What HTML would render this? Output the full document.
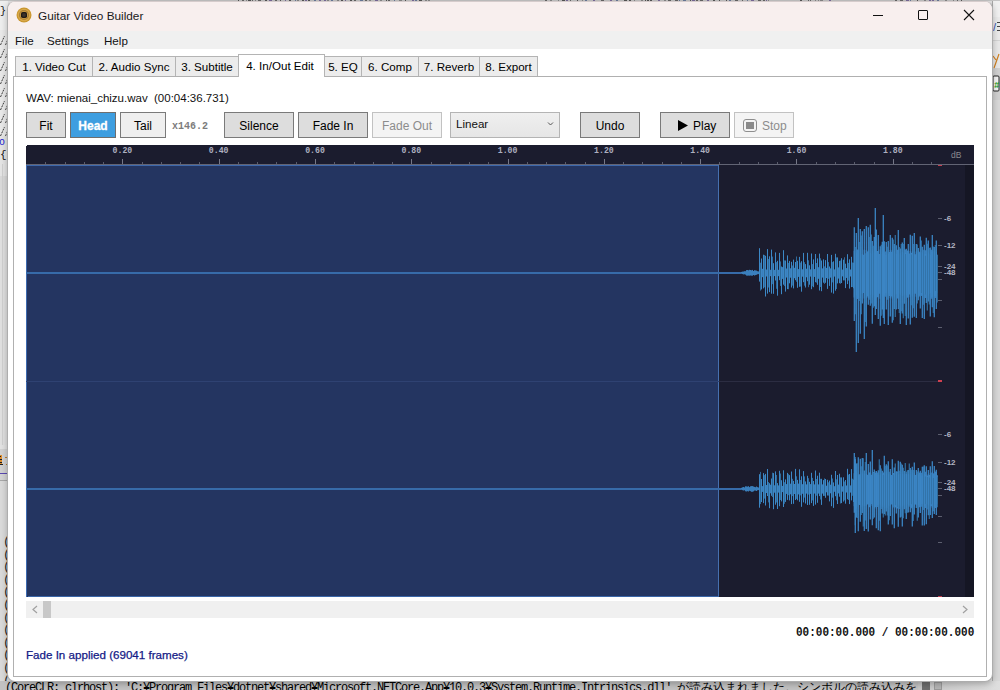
<!DOCTYPE html>
<html><head><meta charset="utf-8">
<style>
*{box-sizing:border-box}
html,body{margin:0;padding:0;width:1000px;height:690px;overflow:hidden;background:#e4e4e4;font-family:"Liberation Sans",sans-serif;}
.a{position:absolute}
.t{position:absolute;white-space:nowrap;line-height:1}
.btn{position:absolute;border:1px solid #7a7a7a;background:#dddddd;color:#000;font-size:12px;display:flex;align-items:center;justify-content:center;padding-top:2px}
.tab{position:absolute;top:56px;height:20px;border:1px solid #b4b4b4;border-bottom:none;background:#ececec;font-size:11.6px;color:#000;display:flex;align-items:center;justify-content:center;padding-bottom:1px}
</style></head><body>
<!-- background: other windows -->
<div class="a" style="left:0;top:0;width:1000px;height:690px;background:#e2e2e2"></div>
<svg class="a" style="left:0;top:0" width="1000" height="690">
  <rect x="0" y="0" width="8" height="30" fill="#eeeeee"/>
  <rect x="0" y="30" width="8" height="106" fill="#e9e9e9"/>
  <rect x="0" y="136" width="8" height="40" fill="#e4e4e4"/>
  <rect x="0" y="176" width="8" height="14" fill="#d9d9d9"/>
  <rect x="0" y="190" width="8" height="255" fill="#e0e0e0"/>
  <rect x="2" y="164" width="1" height="281" fill="#d0d0d0"/>
  <rect x="0" y="449" width="8" height="24" fill="#d2d2d2"/>
  <rect x="0" y="473" width="8" height="1" fill="#5a48b0"/>
  <rect x="0" y="474" width="8" height="6" fill="#d4d4d4"/>
  <rect x="0" y="480" width="8" height="1" fill="#a8a8a8"/>
  <rect x="0" y="481" width="8" height="209" fill="#dadada"/>
  <rect x="0" y="455" width="2" height="9" fill="#e09030"/>
  <rect x="0" y="456" width="1" height="1" fill="#222"/><rect x="0" y="459" width="2" height="1" fill="#222"/><rect x="0" y="462" width="2" height="1" fill="#222"/>
  <rect x="0" y="464" width="3" height="1" fill="#222"/>
  <rect x="5" y="457" width="2" height="1" fill="#c08030"/><rect x="6" y="464" width="1" height="1" fill="#c08030"/>
  <path d="M0.5 45L4.5 36" stroke="#3a3a3a" stroke-width="1" stroke-dasharray="2 1"/><path d="M5.5 45L8 39" stroke="#4a4a4a" stroke-width="1" stroke-dasharray="2 1"/><path d="M0.5 58L4.5 49" stroke="#3a3a3a" stroke-width="1" stroke-dasharray="2 1"/><path d="M5.5 58L8 52" stroke="#4a4a4a" stroke-width="1" stroke-dasharray="2 1"/><path d="M0.5 71L4.5 62" stroke="#3a3a3a" stroke-width="1" stroke-dasharray="2 1"/><path d="M5.5 71L8 65" stroke="#4a4a4a" stroke-width="1" stroke-dasharray="2 1"/><path d="M0.5 84L4.5 75" stroke="#3a3a3a" stroke-width="1" stroke-dasharray="2 1"/><path d="M5.5 84L8 78" stroke="#4a4a4a" stroke-width="1" stroke-dasharray="2 1"/><path d="M0.5 97L4.5 88" stroke="#3a3a3a" stroke-width="1" stroke-dasharray="2 1"/><path d="M5.5 97L8 91" stroke="#4a4a4a" stroke-width="1" stroke-dasharray="2 1"/><path d="M0.5 110L4.5 101" stroke="#3a3a3a" stroke-width="1" stroke-dasharray="2 1"/><path d="M5.5 110L8 104" stroke="#4a4a4a" stroke-width="1" stroke-dasharray="2 1"/><path d="M0.5 123L4.5 114" stroke="#3a3a3a" stroke-width="1" stroke-dasharray="2 1"/><path d="M5.5 123L8 117" stroke="#4a4a4a" stroke-width="1" stroke-dasharray="2 1"/><path d="M0.5 136L4.5 127" stroke="#3a3a3a" stroke-width="1" stroke-dasharray="2 1"/><path d="M5.5 136L8 130" stroke="#4a4a4a" stroke-width="1" stroke-dasharray="2 1"/>
  <text x="0" y="14" font-family="Liberation Mono" font-size="10" fill="#111">}</text>
  <text x="-1" y="145" font-family="Liberation Mono" font-size="10" fill="#2020d0">o</text><rect x="7" y="137" width="1" height="7" fill="#3030d0"/>
  <text x="0" y="158" font-family="Liberation Mono" font-size="11" fill="#111">{</text>
  <g font-family="Liberation Mono" font-size="12.5" fill="#222"><text x="3" y="545.0">(</text><text x="3" y="557.6">(</text><text x="3" y="570.2">(</text><text x="3" y="582.8">(</text><text x="3" y="595.4">(</text><text x="3" y="608.0">(</text><text x="3" y="620.6">(</text><text x="3" y="633.2">(</text><text x="3" y="645.8">(</text><text x="3" y="658.4">(</text><text x="3" y="671.0">(</text><text x="3" y="683.6">(</text></g>
  <rect x="992" y="0" width="8" height="690" fill="#d8d8d8"/>
  <rect x="992" y="0" width="8" height="17" fill="#f0f0f0"/>
  <rect x="992" y="17" width="8" height="23" fill="#eaeaea"/>
  <rect x="992" y="40" width="8" height="1" fill="#d4d4d4"/>
  <rect x="992" y="41" width="8" height="27" fill="#e8e8e8"/>
  <rect x="992" y="68" width="8" height="32" fill="#d0d0d0"/>
  <rect x="993" y="76" width="6" height="15" rx="1" fill="#f4f4f4" stroke="#222" stroke-width="1"/>
  <text x="994" y="88" font-family="Liberation Mono" font-size="9" font-weight="bold" fill="#1a9a1a">#</text>
  <text x="993" y="31" font-family="Liberation Sans" font-size="11" fill="#3050b0">/</text>
  <rect x="997" y="22" width="3" height="1" fill="#444"/><rect x="997" y="26" width="3" height="1" fill="#444"/><rect x="997" y="30" width="3" height="1" fill="#444"/>
  <path d="M993 56L996 60M999 54L994 68" stroke="#d08020" stroke-width="1.2" fill="none"/>
  <rect x="992" y="0" width="1" height="690" fill="#a8a8a8"/>
  <rect x="0" y="0" width="1000" height="1" fill="#c4c4c4"/>
  <rect x="238" y="0" width="1" height="1" fill="#555"/><rect x="242" y="0" width="2" height="1" fill="#666"/><rect x="246" y="0" width="1" height="1" fill="#888"/><rect x="248" y="0" width="3" height="1" fill="#555"/><rect x="252" y="0" width="1" height="1" fill="#666"/><rect x="255" y="0" width="1" height="1" fill="#888"/><rect x="258" y="0" width="3" height="1" fill="#666"/><rect x="265" y="0" width="2" height="1" fill="#555"/><rect x="269" y="0" width="3" height="1" fill="#7a6a9a"/><rect x="275" y="0" width="2" height="1" fill="#666"/><rect x="280" y="0" width="1" height="1" fill="#555"/><rect x="285" y="0" width="1" height="1" fill="#7a6a9a"/><rect x="289" y="0" width="2" height="1" fill="#555"/><rect x="295" y="0" width="1" height="1" fill="#6a7a9a"/><rect x="297" y="0" width="2" height="1" fill="#888"/><rect x="302" y="0" width="2" height="1" fill="#555"/><rect x="305" y="0" width="2" height="1" fill="#7a6a9a"/><rect x="308" y="0" width="2" height="1" fill="#555"/><rect x="314" y="0" width="2" height="1" fill="#6a7a9a"/><rect x="319" y="0" width="2" height="1" fill="#7a6a9a"/><rect x="324" y="0" width="2" height="1" fill="#7a6a9a"/><rect x="327" y="0" width="2" height="1" fill="#888"/><rect x="331" y="0" width="2" height="1" fill="#6a7a9a"/><rect x="337" y="0" width="2" height="1" fill="#888"/><rect x="341" y="0" width="2" height="1" fill="#555"/><rect x="345" y="0" width="1" height="1" fill="#7a6a9a"/><rect x="350" y="0" width="2" height="1" fill="#555"/><rect x="354" y="0" width="2" height="1" fill="#666"/><rect x="360" y="0" width="3" height="1" fill="#6a7a9a"/><rect x="365" y="0" width="2" height="1" fill="#666"/><rect x="369" y="0" width="2" height="1" fill="#888"/><rect x="375" y="0" width="3" height="1" fill="#7a6a9a"/><rect x="380" y="0" width="2" height="1" fill="#888"/><rect x="386" y="0" width="1" height="1" fill="#555"/><rect x="388" y="0" width="2" height="1" fill="#666"/><rect x="394" y="0" width="1" height="1" fill="#6a7a9a"/><rect x="399" y="0" width="3" height="1" fill="#888"/><rect x="405" y="0" width="1" height="1" fill="#555"/><rect x="412" y="0" width="2" height="1" fill="#7a6a9a"/><rect x="415" y="0" width="2" height="1" fill="#6a7a9a"/><rect x="419" y="0" width="3" height="1" fill="#555"/><rect x="425" y="0" width="2" height="1" fill="#888"/><rect x="428" y="0" width="2" height="1" fill="#888"/><rect x="545" y="0" width="2" height="1" fill="#666"/><rect x="550" y="0" width="2" height="1" fill="#888"/><rect x="558" y="0" width="1" height="1" fill="#888"/><rect x="562" y="0" width="3" height="1" fill="#555"/><rect x="566" y="0" width="2" height="1" fill="#7a6a9a"/><rect x="570" y="0" width="1" height="1" fill="#666"/><rect x="577" y="0" width="1" height="1" fill="#555"/><rect x="582" y="0" width="1" height="1" fill="#888"/><rect x="585" y="0" width="2" height="1" fill="#6a7a9a"/><rect x="593" y="0" width="2" height="1" fill="#7a6a9a"/><rect x="601" y="0" width="3" height="1" fill="#666"/><rect x="610" y="0" width="2" height="1" fill="#7a6a9a"/><rect x="616" y="0" width="2" height="1" fill="#6a7a9a"/><rect x="624" y="0" width="3" height="1" fill="#555"/><rect x="629" y="0" width="2" height="1" fill="#555"/><rect x="634" y="0" width="1" height="1" fill="#888"/><rect x="641" y="0" width="2" height="1" fill="#888"/><rect x="645" y="0" width="1" height="1" fill="#555"/><rect x="647" y="0" width="2" height="1" fill="#555"/><rect x="650" y="0" width="2" height="1" fill="#555"/><rect x="658" y="0" width="2" height="1" fill="#7a6a9a"/><rect x="664" y="0" width="2" height="1" fill="#888"/><rect x="668" y="0" width="3" height="1" fill="#666"/><rect x="675" y="0" width="3" height="1" fill="#666"/><rect x="679" y="0" width="1" height="1" fill="#6a7a9a"/><rect x="683" y="0" width="3" height="1" fill="#6a7a9a"/><rect x="690" y="0" width="1" height="1" fill="#555"/><rect x="692" y="0" width="3" height="1" fill="#7a6a9a"/><rect x="696" y="0" width="2" height="1" fill="#666"/><rect x="700" y="0" width="3" height="1" fill="#666"/><rect x="707" y="0" width="2" height="1" fill="#7a6a9a"/><rect x="713" y="0" width="2" height="1" fill="#555"/><rect x="719" y="0" width="1" height="1" fill="#555"/><rect x="726" y="0" width="1" height="1" fill="#555"/><rect x="729" y="0" width="2" height="1" fill="#6a7a9a"/><rect x="735" y="0" width="3" height="1" fill="#666"/><rect x="742" y="0" width="1" height="1" fill="#666"/><rect x="747" y="0" width="1" height="1" fill="#6a7a9a"/><rect x="751" y="0" width="3" height="1" fill="#7a6a9a"/><rect x="758" y="0" width="3" height="1" fill="#666"/><rect x="763" y="0" width="2" height="1" fill="#666"/><rect x="766" y="0" width="1" height="1" fill="#7a6a9a"/><rect x="768" y="0" width="1" height="1" fill="#888"/><rect x="800" y="0" width="2" height="1" fill="#555"/><rect x="808" y="0" width="1" height="1" fill="#666"/><rect x="810" y="0" width="1" height="1" fill="#666"/><rect x="815" y="0" width="1" height="1" fill="#888"/><rect x="818" y="0" width="1" height="1" fill="#888"/><rect x="820" y="0" width="3" height="1" fill="#888"/><rect x="829" y="0" width="2" height="1" fill="#7a6a9a"/><rect x="895" y="0" width="2" height="1" fill="#666"/><rect x="900" y="0" width="3" height="1" fill="#666"/><rect x="906" y="0" width="3" height="1" fill="#7a6a9a"/><rect x="910" y="0" width="1" height="1" fill="#6a7a9a"/><rect x="917" y="0" width="1" height="1" fill="#555"/><rect x="924" y="0" width="2" height="1" fill="#888"/><rect x="929" y="0" width="2" height="1" fill="#7a6a9a"/><rect x="932" y="0" width="2" height="1" fill="#7a6a9a"/><rect x="937" y="0" width="2" height="1" fill="#6a7a9a"/><rect x="945" y="0" width="2" height="1" fill="#888"/><rect x="953" y="0" width="1" height="1" fill="#888"/><rect x="957" y="0" width="1" height="1" fill="#666"/><rect x="961" y="0" width="1" height="1" fill="#555"/>
</svg>
<div class="a" style="left:0;top:681px;width:1000px;height:9px;background:#c2c2c2"></div>
<div class="t" style="left:5px;top:682px;font-family:'Liberation Mono',monospace;font-size:12px;color:#000"><span style="letter-spacing:-1.2px">(CoreCLR: clrhost): 'C:¥Program Files¥dotnet¥shared¥Microsoft.NETCore.App¥10.0.3¥System.Runtime.Intrinsics.dll' </span>が読み込まれました。シンボルの読み込みを</div>
<div class="a" style="left:918px;top:681px;width:82px;height:9px;background:linear-gradient(90deg,#c6c6c6,#dedede)"></div>
<div class="a" style="left:922px;top:682px;width:8px;height:8px;background:#6e6e6e"></div>
<div class="a" style="left:934px;top:682px;width:8px;height:8px;border:1px solid #9a9a9a;background:#b4b4b4"></div>
<!-- window -->
<div class="a" style="left:7px;top:1px;width:986px;height:681px;border:1px solid #adadad;border-top-color:#d6cccc;border-radius:8px;background:#fff;box-shadow:0 2px 6px rgba(0,0,0,0.25);overflow:hidden">
  <div class="a" style="left:0;top:0;width:984px;height:29px;background:#f8efee"></div>
  <div class="a" style="left:0;top:29px;width:984px;height:18px;background:#f0f0f0"></div>
</div>
<!-- title -->
<svg class="a" style="left:16px;top:7px" width="16" height="16"><circle cx="8" cy="8" r="7.5" fill="#c9962f"/><circle cx="8" cy="8" r="6.3" fill="#d8a84a"/><circle cx="8" cy="8" r="5" fill="#a57c34"/><circle cx="8" cy="8" r="4.2" fill="#c4963e"/><rect x="5" y="5" width="6" height="6" rx="1.8" fill="#1e1a16"/><rect x="6.3" y="6.3" width="3.4" height="3.4" rx="1" fill="#3a322a"/></svg>
<div class="t" style="left:38px;top:10.5px;font-size:11.8px;color:#1a1a1a">Guitar Video Builder</div>
<div class="a" style="left:873px;top:15px;width:10px;height:1px;background:#111"></div>
<div class="a" style="left:918px;top:10px;width:10px;height:10px;border:1px solid #111;border-radius:1px"></div>
<svg class="a" style="left:963px;top:9px" width="12" height="12"><path d="M1 1L11 11M11 1L1 11" stroke="#111" stroke-width="1.1"/></svg>
<!-- menu -->
<div class="t" style="left:15px;top:35px;font-size:11.6px;color:#111">File</div>
<div class="t" style="left:47px;top:35px;font-size:11.6px;color:#111">Settings</div>
<div class="t" style="left:104px;top:35px;font-size:11.6px;color:#111">Help</div>

<!-- tab panel -->
<div class="a" style="left:13px;top:76px;width:974px;height:601px;border:1px solid #b0b0b0;background:#fff"></div>
<div class="tab" style="left:15px;width:78px">1. Video Cut</div>
<div class="tab" style="left:92px;width:84px">2. Audio Sync</div>
<div class="tab" style="left:175px;width:64px">3. Subtitle</div>
<div class="tab" style="left:324px;width:38px">5. EQ</div>
<div class="tab" style="left:361px;width:58px">6. Comp</div>
<div class="tab" style="left:418px;width:62px">7. Reverb</div>
<div class="tab" style="left:479px;width:59px">8. Export</div>
<div class="tab" style="left:238px;top:54px;width:87px;height:23px;background:#fff;padding-bottom:2px;padding-right:3px">4. In/Out Edit</div>

<div class="t" style="left:26px;top:92.5px;font-size:11.5px;color:#111">WAV: mienai_chizu.wav&nbsp; (00:04:36.731)</div>

<!-- toolbar -->
<div class="btn" style="left:26px;top:112px;width:40px;height:26px">Fit</div>
<div class="btn" style="left:70px;top:112px;width:46px;height:26px;background:#3e9ee0;border-color:#6e6e6e;color:#fff;font-weight:bold;-webkit-text-stroke:0.3px #fff">Head</div>
<div class="btn" style="left:120px;top:112px;width:46px;height:26px;background:#efefef">Tail</div>
<div class="t" style="left:172px;top:122px;font-family:'Liberation Mono',monospace;font-size:10px;color:#7c7c7c;font-weight:bold">x146.2</div>
<div class="btn" style="left:224px;top:112px;width:70px;height:26px">Silence</div>
<div class="btn" style="left:298px;top:112px;width:70px;height:26px">Fade In</div>
<div class="btn" style="left:372px;top:112px;width:70px;height:26px;background:#f4f4f4;border-color:#c2c2c2;color:#8c8c8c">Fade Out</div>
<div class="a" style="left:450px;top:112px;width:110px;height:26px;border:1px solid #b4b4b4;background:linear-gradient(#efefef,#e6e6e6)"></div>
<div class="t" style="left:456px;top:118px;font-size:11.6px;color:#111">Linear</div>
<svg class="a" style="left:547px;top:121px" width="8" height="6"><path d="M1 1.5L3.5 4L6 1.5" stroke="#555" stroke-width="1" fill="none"/></svg>
<div class="btn" style="left:580px;top:112px;width:60px;height:26px">Undo</div>
<div class="btn" style="left:660px;top:112px;width:70px;height:26px"></div>
<svg class="a" style="left:677px;top:119px" width="12" height="13"><path d="M1 1L11 6.5L1 12Z" fill="#000"/></svg>
<div class="t" style="left:693px;top:120px;font-size:12px;color:#000">Play</div>
<div class="btn" style="left:734px;top:112px;width:60px;height:26px;background:#f4f4f4;border-color:#c2c2c2"></div>
<div class="a" style="left:743px;top:119px;width:14px;height:13px;border:1.6px solid #8e8e8e;border-radius:3px"></div>
<div class="a" style="left:746px;top:122px;width:8px;height:7px;background:#8a8a8a"></div>
<div class="t" style="left:762px;top:120px;font-size:12px;color:#8c8c8c">Stop</div>

<!-- waveform panel -->
<svg class="a" style="left:0;top:0" width="1000" height="690" shape-rendering="crispEdges">
  <rect x="26" y="145" width="948" height="452" rx="2" fill="#1b1c2e"/>
  <rect x="965" y="165" width="9" height="432" fill="#151624"/>
  <path d="M26 165H719V597H28Q26 597 26 595Z" fill="#243561"/>
  <rect x="26" y="164" width="948" height="1" fill="#626474"/>
  <rect x="26" y="165" width="693" height="1" fill="#3d68ac"/>
  <rect x="26" y="165" width="1" height="432" fill="#3d6ab0"/>
  <rect x="718" y="165" width="1" height="432" fill="#4670b0"/>
  <rect x="28" y="596" width="691" height="1" fill="#3a66a8"/>
  <rect x="26" y="381" width="693" height="1" fill="#2f4272"/>
  <rect x="719" y="381" width="220" height="1" fill="#2c2d42"/>
  <rect x="938" y="380" width="4" height="2" fill="#d04050"/>
  <rect x="938" y="165" width="4" height="1" fill="#c04050"/>
  <rect x="938" y="596" width="4" height="1" fill="#c04050"/>
  <rect x="26" y="272" width="715" height="2" fill="#376ba9"/>
  <rect x="26" y="488" width="715" height="2" fill="#376ba9"/>
  <rect x="45" y="162" width="1" height="2" fill="#5a5c6c"/>
<rect x="65" y="162" width="1" height="2" fill="#5a5c6c"/>
<rect x="84" y="162" width="1" height="2" fill="#5a5c6c"/>
<rect x="103" y="162" width="1" height="2" fill="#5a5c6c"/>
<rect x="122" y="159" width="1" height="5" fill="#767888"/>
<rect x="142" y="162" width="1" height="2" fill="#5a5c6c"/>
<rect x="161" y="162" width="1" height="2" fill="#5a5c6c"/>
<rect x="180" y="162" width="1" height="2" fill="#5a5c6c"/>
<rect x="199" y="162" width="1" height="2" fill="#5a5c6c"/>
<rect x="219" y="159" width="1" height="5" fill="#767888"/>
<rect x="238" y="162" width="1" height="2" fill="#5a5c6c"/>
<rect x="257" y="162" width="1" height="2" fill="#5a5c6c"/>
<rect x="276" y="162" width="1" height="2" fill="#5a5c6c"/>
<rect x="296" y="162" width="1" height="2" fill="#5a5c6c"/>
<rect x="315" y="159" width="1" height="5" fill="#767888"/>
<rect x="334" y="162" width="1" height="2" fill="#5a5c6c"/>
<rect x="354" y="162" width="1" height="2" fill="#5a5c6c"/>
<rect x="373" y="162" width="1" height="2" fill="#5a5c6c"/>
<rect x="392" y="162" width="1" height="2" fill="#5a5c6c"/>
<rect x="411" y="159" width="1" height="5" fill="#767888"/>
<rect x="431" y="162" width="1" height="2" fill="#5a5c6c"/>
<rect x="450" y="162" width="1" height="2" fill="#5a5c6c"/>
<rect x="469" y="162" width="1" height="2" fill="#5a5c6c"/>
<rect x="488" y="162" width="1" height="2" fill="#5a5c6c"/>
<rect x="508" y="159" width="1" height="5" fill="#767888"/>
<rect x="527" y="162" width="1" height="2" fill="#5a5c6c"/>
<rect x="546" y="162" width="1" height="2" fill="#5a5c6c"/>
<rect x="565" y="162" width="1" height="2" fill="#5a5c6c"/>
<rect x="585" y="162" width="1" height="2" fill="#5a5c6c"/>
<rect x="604" y="159" width="1" height="5" fill="#767888"/>
<rect x="623" y="162" width="1" height="2" fill="#5a5c6c"/>
<rect x="642" y="162" width="1" height="2" fill="#5a5c6c"/>
<rect x="662" y="162" width="1" height="2" fill="#5a5c6c"/>
<rect x="681" y="162" width="1" height="2" fill="#5a5c6c"/>
<rect x="700" y="159" width="1" height="5" fill="#767888"/>
<rect x="719" y="162" width="1" height="2" fill="#5a5c6c"/>
<rect x="739" y="162" width="1" height="2" fill="#5a5c6c"/>
<rect x="758" y="162" width="1" height="2" fill="#5a5c6c"/>
<rect x="777" y="162" width="1" height="2" fill="#5a5c6c"/>
<rect x="796" y="159" width="1" height="5" fill="#767888"/>
<rect x="816" y="162" width="1" height="2" fill="#5a5c6c"/>
<rect x="835" y="162" width="1" height="2" fill="#5a5c6c"/>
<rect x="854" y="162" width="1" height="2" fill="#5a5c6c"/>
<rect x="874" y="162" width="1" height="2" fill="#5a5c6c"/>
<rect x="893" y="159" width="1" height="5" fill="#767888"/>
<rect x="912" y="162" width="1" height="2" fill="#5a5c6c"/>
<rect x="931" y="162" width="1" height="2" fill="#5a5c6c"/>
  <g font-family="Liberation Mono" font-size="8.2" font-weight="bold" fill="#aeb0c0" shape-rendering="auto">
  <text x="122.4" y="153" text-anchor="middle">0.20</text>
<text x="218.7" y="153" text-anchor="middle">0.40</text>
<text x="315.0" y="153" text-anchor="middle">0.60</text>
<text x="411.3" y="153" text-anchor="middle">0.80</text>
<text x="507.6" y="153" text-anchor="middle">1.00</text>
<text x="603.9" y="153" text-anchor="middle">1.20</text>
<text x="700.2" y="153" text-anchor="middle">1.40</text>
<text x="796.5" y="153" text-anchor="middle">1.60</text>
<text x="892.8" y="153" text-anchor="middle">1.80</text>
  </g>
  <text x="951" y="158" font-family="Liberation Sans" font-size="8.5" fill="#8a8a90" shape-rendering="auto">dB</text>
  <g shape-rendering="auto">
  <path d="M741.5 271.9V273.8M742.5 271.6V274.1M743.5 271.5V274.4M744.5 271.2V274.3M745.5 271.2V274.7M746.5 270.1V275.6M747.5 270.0V275.7M748.5 270.3V275.6M749.5 269.8V275.7M750.5 270.0V275.5M751.5 270.3V275.7M752.5 269.9V275.7M753.5 271.0V275.0M754.5 270.2V275.5M755.5 270.4V275.1M756.5 270.6V274.8M757.5 271.2V274.3M758.5 271.4V274.1M759.5 269.6V276.4M760.5 268.7V277.3M761.5 268.5V277.5M762.5 268.8V277.2M763.5 268.2V277.8M764.5 267.2V278.8M765.5 268.0V278.0M766.5 269.5V276.5M767.5 267.3V278.7M768.5 269.4V276.6M769.5 269.1V276.9M770.5 269.8V276.2M771.5 269.7V276.3M772.5 269.5V276.5M773.5 267.4V278.6M774.5 269.9V276.1M775.5 267.8V278.2M776.5 267.1V278.9M777.5 269.1V276.9M778.5 269.8V276.2M779.5 269.4V276.6M780.5 269.5V276.5M781.5 269.1V276.9M782.5 267.1V278.9M783.5 268.6V277.4M784.5 268.2V277.8M785.5 267.2V278.8M786.5 268.5V277.5M787.5 269.3V276.7M788.5 268.4V277.6M789.5 268.8V277.2M790.5 268.3V277.7M791.5 268.1V277.9M792.5 268.6V277.4M793.5 267.9V278.1M794.5 267.8V278.2M795.5 268.0V278.0M796.5 268.6V277.4M797.5 268.9V277.1M798.5 269.1V276.9M799.5 269.1V276.9M800.5 269.9V276.1M801.5 269.1V276.9M802.5 269.3V276.7M803.5 269.4V276.6M804.5 269.7V276.3M805.5 267.5V278.5M806.5 268.7V277.3M807.5 269.0V277.0M808.5 268.6V277.4M809.5 268.4V277.6M810.5 269.4V276.6M811.5 269.4V276.6M812.5 268.1V277.9M813.5 269.6V276.4M814.5 269.1V276.9M815.5 269.0V277.0M816.5 268.8V277.2M817.5 270.0V276.0M818.5 267.2V278.8M819.5 268.7V277.3M820.5 269.3V276.7M821.5 268.0V278.0M822.5 268.4V277.6M823.5 269.3V276.7M824.5 269.1V276.9M825.5 267.3V278.7M826.5 267.9V278.1M827.5 267.3V278.7M828.5 267.8V278.2M829.5 268.0V278.0M830.5 268.4V277.6M831.5 268.2V277.8M832.5 267.4V278.6M833.5 268.9V277.1M834.5 269.4V276.6M835.5 269.5V276.5M836.5 267.6V278.4M837.5 268.1V277.9M838.5 267.4V278.6M839.5 269.2V276.8M840.5 268.6V277.4M841.5 269.8V276.2M842.5 269.6V276.4M843.5 267.1V278.9M844.5 268.5V277.5M845.5 268.9V277.1M846.5 268.1V277.9M847.5 269.4V276.6M848.5 268.3V277.7M849.5 269.8V276.2M850.5 269.5V276.5M851.5 267.7V278.3M852.5 268.1V277.9M853.5 268.5V277.5" stroke="#3a7fbc" stroke-width="1"/>
<path d="M759.5 248.2V281.6M761.5 258.5V289.4M763.5 254.7V288.4M765.5 255.8V296.5M767.5 249.1V293.6M769.5 256.3V292.1M771.5 249.6V293.7M773.5 263.2V293.8M775.5 252.4V280.5M777.5 260.8V295.7M779.5 252.9V280.2M781.5 266.5V294.2M783.5 250.2V284.7M785.5 260.5V291.6M787.5 255.4V289.1M789.5 260.9V283.3M791.5 261.8V287.5M793.5 259.6V288.4M795.5 262.0V280.2M797.5 260.8V287.8M799.5 256.9V286.8M801.5 261.2V291.7M803.5 252.9V282.2M805.5 264.1V287.5M807.5 252.8V281.2M809.5 265.3V284.7M811.5 253.5V289.2M813.5 259.4V287.2M815.5 254.0V282.2M817.5 258.4V284.8M819.5 253.6V290.5M821.5 260.5V291.2M823.5 259.4V282.7M825.5 260.1V282.8M827.5 254.0V288.9M829.5 266.5V285.9M831.5 254.9V292.6M833.5 261.3V293.6M835.5 253.8V290.7M837.5 257.4V283.4M839.5 260.9V283.2M841.5 258.2V283.0M843.5 259.7V280.4M845.5 263.7V288.1M847.5 254.2V284.1M849.5 259.3V288.6M851.5 256.8V287.1M853.5 262.7V288.3" stroke="#3c88c6" stroke-width="1"/>
<path d="M760.5 262.7V290.6M764.5 255.0V287.3M768.5 259.0V287.5M772.5 256.6V284.2M776.5 262.1V288.8M780.5 261.4V285.9M784.5 260.4V286.1M788.5 262.9V289.2M792.5 265.5V285.6M796.5 256.5V281.8M800.5 262.6V286.6M804.5 262.2V285.7M808.5 260.3V287.2M812.5 264.1V286.3M816.5 263.0V282.7M820.5 258.3V287.0M824.5 266.4V283.9M828.5 262.1V278.8M832.5 262.1V282.4M836.5 257.4V289.0M840.5 260.5V283.8M844.5 257.3V280.4M848.5 262.9V280.6M852.5 262.5V287.0" stroke="#2f6a9a" stroke-width="1"/>
<path d="M854.3 250.8V297.4M855.3 250.8V297.4M856.3 252.4V295.6M857.3 249.4V299.0M858.3 250.3V298.0M859.3 250.1V298.2M860.3 250.2V298.0M861.3 254.4V293.5M862.3 254.1V293.7M863.3 254.7V293.1M864.3 249.7V298.6M865.3 254.3V293.6M866.3 250.0V298.3M867.3 251.5V296.6M868.3 250.4V297.9M869.3 250.5V297.7M870.3 253.1V294.9M871.3 253.9V294.0M872.3 250.5V297.8M873.3 252.9V295.1M874.3 252.0V296.1M875.3 252.5V295.5M876.3 250.9V297.4M877.3 251.0V297.2M878.3 251.1V297.0M879.3 254.1V293.8M880.3 249.5V298.8M881.3 253.9V294.0M882.3 251.5V296.7M883.3 249.3V299.1M884.3 252.5V295.5M885.3 251.5V296.7M886.3 254.9V293.0M887.3 252.8V295.2M888.3 254.1V293.7M889.3 252.1V296.0M890.3 250.0V298.3M891.3 251.7V296.5M892.3 249.9V298.5M893.3 252.2V295.9M894.3 250.7V297.5M895.3 253.5V294.4M896.3 253.9V294.0M897.3 249.8V298.5M898.3 249.8V298.5M899.3 254.5V293.4M900.3 253.2V294.7M901.3 255.0V292.8M902.3 252.1V296.0M903.3 252.7V295.4M904.3 253.4V294.6M905.3 249.5V298.8M906.3 252.8V295.3M907.3 250.5V297.8M908.3 251.1V297.1M909.3 253.4V294.6M910.3 251.0V297.2M911.3 252.9V295.1M912.3 251.6V296.5M913.3 253.9V294.0M914.3 254.3V293.6M915.3 254.2V293.7M916.3 251.4V296.7M917.3 253.1V294.9M918.3 250.7V297.5M919.3 251.7V296.4M920.3 253.4V294.6M921.3 252.0V296.1M922.3 252.9V295.1M923.3 250.4V297.9M924.3 254.3V293.5M925.3 250.3V297.9M926.3 253.9V294.0M927.3 250.5V297.7M928.3 252.6V295.4M929.3 253.8V294.1M930.3 254.8V293.0M931.3 249.7V298.7M932.3 251.7V296.4M933.3 250.9V297.3M934.3 252.1V296.0M935.3 250.4V297.9M936.3 251.9V296.3M937.3 254.8V293.0" stroke="#3a80bf" stroke-width="1.3"/>
<path d="M855.3 247.0V314.3M859.3 241.9V301.1M861.3 235.6V314.3M865.3 253.2V322.0M869.3 237.0V299.7M871.3 234.6V303.4M873.3 245.7V307.7M881.3 244.7V315.7M883.3 249.7V314.6M887.3 246.7V299.7M893.3 239.6V320.2M895.3 235.0V317.0M899.3 247.0V313.0M901.3 243.9V311.3M903.3 244.0V318.2M905.3 254.1V316.1M911.3 254.5V305.2M913.3 244.0V308.3M917.3 244.4V303.5M921.3 240.5V293.1M923.3 249.8V304.7M925.3 255.8V294.4M927.3 243.8V310.5M929.3 248.1V304.4M933.3 246.6V313.0M935.3 245.1V290.9M937.3 255.0V302.4" stroke="#2f6a9a" stroke-width="1.3"/>
<path d="M854.3 227.3V321.1M856.3 244.9V320.9M858.3 236.0V334.4M860.3 229.1V333.7M862.3 231.2V303.6M864.3 244.9V308.1M866.3 226.0V326.5M868.3 227.3V304.8M870.3 224.7V305.7M872.3 241.0V323.8M874.3 236.9V306.2M876.3 229.6V308.9M878.3 235.1V318.9M880.3 246.3V325.8M882.3 241.7V309.5M884.3 241.2V323.9M886.3 242.1V309.5M888.3 241.0V324.9M890.3 234.9V316.4M892.3 237.8V322.7M894.3 244.0V308.9M896.3 245.2V309.4M898.3 230.1V309.0M900.3 248.4V323.9M902.3 242.4V313.5M904.3 238.1V303.8M906.3 248.8V325.1M908.3 244.0V318.5M910.3 234.8V324.6M912.3 235.8V317.8M914.3 233.0V316.8M916.3 244.1V318.0M918.3 247.9V300.3M920.3 236.6V308.5M922.3 246.7V317.9M924.3 244.7V319.1M926.3 237.8V302.9M928.3 240.5V301.5M930.3 247.6V316.5M932.3 235.0V307.2M934.3 247.0V317.3M936.3 240.5V309.1M856.3 233.0V352.0M858.3 218.0V343.0M875.3 208.0V315.0M883.3 215.0V318.0M864.3 229.0V339.0" stroke="#3b85c4" stroke-width="1.3"/>
<path d="M741.5 487.8V489.8M742.5 487.3V490.2M743.5 487.0V490.5M744.5 487.4V490.3M745.5 486.3V491.3M746.5 486.4V491.5M747.5 486.6V491.2M748.5 486.2V491.5M749.5 487.1V490.8M750.5 486.3V491.2M751.5 486.1V491.8M752.5 486.1V491.8M753.5 486.5V491.4M754.5 486.9V490.6M755.5 487.2V490.6M756.5 486.5V491.0M757.5 487.1V490.3M758.5 487.5V490.1M759.5 484.4V493.6M760.5 485.5V492.5M761.5 485.9V492.1M762.5 486.1V491.9M763.5 486.3V491.7M764.5 485.5V492.5M765.5 485.4V492.6M766.5 485.0V493.0M767.5 483.7V494.3M768.5 484.0V494.0M769.5 485.3V492.7M770.5 484.7V493.3M771.5 485.8V492.2M772.5 484.3V493.7M773.5 485.4V492.6M774.5 485.3V492.7M775.5 486.0V492.0M776.5 484.0V494.0M777.5 486.1V491.9M778.5 485.4V492.6M779.5 485.4V492.6M780.5 485.5V492.5M781.5 486.1V491.9M782.5 485.9V492.1M783.5 485.9V492.1M784.5 484.9V493.1M785.5 484.7V493.3M786.5 484.1V493.9M787.5 486.1V491.9M788.5 485.0V493.0M789.5 484.3V493.7M790.5 483.7V494.3M791.5 486.0V492.0M792.5 484.0V494.0M793.5 483.6V494.4M794.5 484.0V494.0M795.5 485.0V493.0M796.5 485.5V492.5M797.5 485.3V492.7M798.5 483.6V494.4M799.5 485.0V493.0M800.5 485.6V492.4M801.5 485.3V492.7M802.5 484.2V493.8M803.5 484.5V493.5M804.5 484.4V493.6M805.5 484.2V493.8M806.5 484.4V493.6M807.5 484.5V493.5M808.5 484.8V493.2M809.5 485.1V492.9M810.5 484.1V493.9M811.5 485.4V492.6M812.5 484.1V493.9M813.5 484.0V494.0M814.5 484.4V493.6M815.5 484.9V493.1M816.5 484.0V494.0M817.5 484.4V493.6M818.5 484.4V493.6M819.5 484.2V493.8M820.5 485.2V492.8M821.5 484.6V493.4M822.5 484.4V493.6M823.5 485.1V492.9M824.5 484.4V493.6M825.5 485.0V493.0M826.5 485.7V492.3M827.5 485.4V492.6M828.5 486.2V491.8M829.5 484.6V493.4M830.5 484.7V493.3M831.5 486.3V491.7M832.5 485.2V492.8M833.5 485.3V492.7M834.5 486.2V491.8M835.5 484.8V493.2M836.5 483.7V494.3M837.5 484.1V493.9M838.5 484.6V493.4M839.5 484.7V493.3M840.5 483.7V494.3M841.5 483.9V494.1M842.5 486.3V491.7M843.5 484.6V493.4M844.5 483.9V494.1M845.5 485.7V492.3M846.5 485.5V492.5M847.5 483.7V494.3M848.5 485.6V492.4M849.5 485.2V492.8M850.5 485.4V492.6M851.5 485.5V492.5M852.5 484.6V493.4M853.5 484.2V493.8" stroke="#3a7fbc" stroke-width="1"/>
<path d="M759.5 474.2V507.7M761.5 479.0V502.0M763.5 473.1V503.1M765.5 473.9V505.5M767.5 469.0V496.0M769.5 483.2V508.2M771.5 478.5V495.8M773.5 473.1V509.2M775.5 471.4V504.7M777.5 483.1V509.0M779.5 470.8V506.2M781.5 480.2V501.4M783.5 470.3V507.0M785.5 479.4V501.9M787.5 472.9V499.9M789.5 475.1V500.4M791.5 471.5V504.1M793.5 480.9V503.8M795.5 468.9V500.0M797.5 479.9V500.3M799.5 469.3V501.8M801.5 476.3V506.8M803.5 471.1V502.4M805.5 481.4V503.5M807.5 475.8V505.0M809.5 481.8V504.8M811.5 472.8V503.1M813.5 481.0V505.9M815.5 470.5V504.6M817.5 475.7V502.8M819.5 472.7V496.1M821.5 478.8V504.9M823.5 480.1V495.9M825.5 479.0V497.8M827.5 479.8V495.5M829.5 480.6V501.4M831.5 474.8V506.2M833.5 482.4V507.9M835.5 471.0V496.2M837.5 475.0V504.0M839.5 473.7V496.7M841.5 477.4V503.1M843.5 477.3V501.6M845.5 480.0V503.7M847.5 468.8V499.2M849.5 474.0V504.1M851.5 469.1V500.4M853.5 479.6V502.0" stroke="#3c88c6" stroke-width="1"/>
<path d="M760.5 471.9V504.1M764.5 475.1V498.6M768.5 482.0V502.4M772.5 472.7V497.1M776.5 475.0V502.5M780.5 473.5V500.0M784.5 482.2V503.8M788.5 474.1V495.2M792.5 478.8V496.1M796.5 476.3V498.9M800.5 480.0V495.4M804.5 476.4V497.6M808.5 478.2V494.6M812.5 477.9V500.4M816.5 479.0V495.7M820.5 478.8V499.5M824.5 478.4V495.9M828.5 482.3V495.6M832.5 478.5V497.7M836.5 479.3V500.3M840.5 477.4V503.5M844.5 481.5V500.4M848.5 474.6V500.0M852.5 478.7V495.8" stroke="#2f6a9a" stroke-width="1"/>
<path d="M854.3 473.3V506.3M855.3 474.6V504.9M856.3 471.3V508.5M857.3 472.8V506.8M858.3 475.2V504.2M859.3 474.3V505.1M860.3 474.4V505.1M861.3 472.4V507.3M862.3 474.6V504.9M863.3 473.3V506.3M864.3 473.8V505.7M865.3 473.5V506.0M866.3 473.9V505.6M867.3 474.8V504.6M868.3 475.4V504.0M869.3 472.6V507.0M870.3 472.2V507.5M871.3 475.0V504.3M872.3 473.5V506.1M873.3 472.1V507.6M874.3 472.0V507.7M875.3 472.7V506.9M876.3 471.3V508.4M877.3 472.6V507.1M878.3 474.7V504.7M879.3 475.1V504.3M880.3 475.0V504.4M881.3 472.9V506.7M882.3 474.0V505.5M883.3 472.4V507.3M884.3 473.8V505.8M885.3 471.5V508.2M886.3 472.6V507.1M887.3 471.6V508.1M888.3 474.5V504.9M889.3 473.4V506.2M890.3 474.0V505.5M891.3 474.9V504.5M892.3 475.3V504.1M893.3 473.0V506.6M894.3 473.5V506.0M895.3 472.5V507.2M896.3 471.5V508.3M897.3 471.4V508.4M898.3 475.1V504.3M899.3 474.2V505.3M900.3 474.0V505.5M901.3 472.1V507.6M902.3 473.4V506.2M903.3 473.9V505.6M904.3 474.8V504.6M905.3 472.3V507.4M906.3 471.7V508.0M907.3 475.2V504.1M908.3 474.0V505.5M909.3 474.6V504.9M910.3 474.4V505.1M911.3 471.6V508.2M912.3 472.6V507.0M913.3 475.2V504.2M914.3 472.7V506.9M915.3 475.0V504.4M916.3 474.7V504.8M917.3 474.1V505.4M918.3 474.4V505.0M919.3 472.5V507.2M920.3 472.7V506.9M921.3 472.8V506.8M922.3 475.7V503.7M923.3 475.5V503.9M924.3 473.4V506.2M925.3 471.7V508.0M926.3 475.4V503.9M927.3 475.4V503.9M928.3 474.3V505.1M929.3 474.9V504.5M930.3 473.3V506.2M931.3 473.3V506.3M932.3 471.9V507.8M933.3 473.5V506.0M934.3 472.9V506.7M935.3 471.6V508.1M936.3 472.0V507.7M937.3 475.3V504.1" stroke="#3a80bf" stroke-width="1.3"/>
<path d="M855.3 457.0V525.2M857.3 463.2V517.9M861.3 466.2V515.0M863.3 458.2V526.5M865.3 462.1V520.6M873.3 472.5V518.7M879.3 459.3V520.7M881.3 468.6V509.0M883.3 474.7V517.4M885.3 465.8V515.4M887.3 465.4V515.5M889.3 471.8V520.3M893.3 474.7V507.4M895.3 463.5V505.3M897.3 472.8V506.9M899.3 470.8V509.1M901.3 463.6V516.8M903.3 467.7V518.3M905.3 463.1V513.2M907.3 470.3V512.7M909.3 463.6V506.7M911.3 469.8V504.3M913.3 470.1V520.9M917.3 471.4V520.8M923.3 466.5V510.1M925.3 476.4V504.1M927.3 477.1V509.5M929.3 477.4V519.1M931.3 473.7V504.3M933.3 477.9V511.3M937.3 476.7V507.2" stroke="#2f6a9a" stroke-width="1.3"/>
<path d="M854.3 453.0V512.7M856.3 463.6V517.4M858.3 457.3V531.3M860.3 458.8V521.8M862.3 458.0V513.0M864.3 470.4V531.1M866.3 453.1V522.3M868.3 464.0V531.5M870.3 461.6V519.4M872.3 461.0V525.2M874.3 469.5V517.6M876.3 470.9V528.2M878.3 470.3V530.2M880.3 465.2V531.3M882.3 470.7V513.6M884.3 455.8V514.1M886.3 464.2V511.6M888.3 461.3V524.5M890.3 469.1V516.0M892.3 459.3V524.6M894.3 467.4V528.3M896.3 471.4V513.4M898.3 460.7V526.7M900.3 461.7V517.4M902.3 464.7V526.6M904.3 471.0V509.3M906.3 473.7V519.1M908.3 470.1V512.4M910.3 468.0V512.2M912.3 466.7V526.5M914.3 462.4V514.6M916.3 469.9V508.1M918.3 468.1V517.6M920.3 470.8V512.9M922.3 466.7V525.5M924.3 465.2V525.4M926.3 466.2V524.2M928.3 469.9V515.2M930.3 466.3V514.9M932.3 461.2V518.0M934.3 465.9V514.0M936.3 469.8V515.0M855.3 459.0V533.0M872.3 450.0V519.0M866.3 456.0V529.0" stroke="#3b85c4" stroke-width="1.3"/>
  </g>
  <g font-family="Liberation Sans" font-size="8" font-weight="bold" fill="#b4b6c4">
  <rect x="938" y="218" width="4" height="1" fill="#5c5e6e"/>
<text x="944" y="221">-6</text>
<rect x="938" y="245" width="4" height="1" fill="#5c5e6e"/>
<text x="944" y="248">-12</text>
<rect x="938" y="266" width="4" height="1" fill="#5c5e6e"/>
<text x="944" y="269">-24</text>
<rect x="938" y="272" width="4" height="1" fill="#5c5e6e"/>
<text x="944" y="275">-48</text>
<rect x="938" y="279" width="4" height="1" fill="#5c5e6e"/>
<rect x="938" y="300" width="4" height="1" fill="#5c5e6e"/>
<rect x="938" y="327" width="4" height="1" fill="#5c5e6e"/>
  <rect x="938" y="434" width="4" height="1" fill="#5c5e6e"/>
<text x="944" y="437">-6</text>
<rect x="938" y="462" width="4" height="1" fill="#5c5e6e"/>
<text x="944" y="465">-12</text>
<rect x="938" y="482" width="4" height="1" fill="#5c5e6e"/>
<text x="944" y="485">-24</text>
<rect x="938" y="488" width="4" height="1" fill="#5c5e6e"/>
<text x="944" y="491">-48</text>
<rect x="938" y="495" width="4" height="1" fill="#5c5e6e"/>
<rect x="938" y="516" width="4" height="1" fill="#5c5e6e"/>
<rect x="938" y="542" width="4" height="1" fill="#5c5e6e"/>
  </g>
</svg>

<!-- scrollbar -->
<div class="a" style="left:26px;top:601px;width:948px;height:17px;background:#f0f0f0"></div>
<div class="a" style="left:43px;top:601px;width:8px;height:17px;background:#c8c8c8"></div>
<svg class="a" style="left:31px;top:605px" width="8" height="9"><path d="M6 1L2 4.5L6 8" stroke="#a0a0a0" stroke-width="1.2" fill="none"/></svg>
<svg class="a" style="left:961px;top:605px" width="8" height="9"><path d="M2 1L6 4.5L2 8" stroke="#a0a0a0" stroke-width="1.2" fill="none"/></svg>

<div class="t" style="left:796px;top:627px;font-family:'Liberation Mono',monospace;font-size:11px;color:#111;font-weight:bold;transform:scaleY(1.14);transform-origin:0 0">00:00:00.000 / 00:00:00.000</div>
<div class="t" style="left:26px;top:649px;font-size:11.6px;color:#141a86;-webkit-text-stroke:0.25px #141a86">Fade In applied (69041 frames)</div>
</body></html>
